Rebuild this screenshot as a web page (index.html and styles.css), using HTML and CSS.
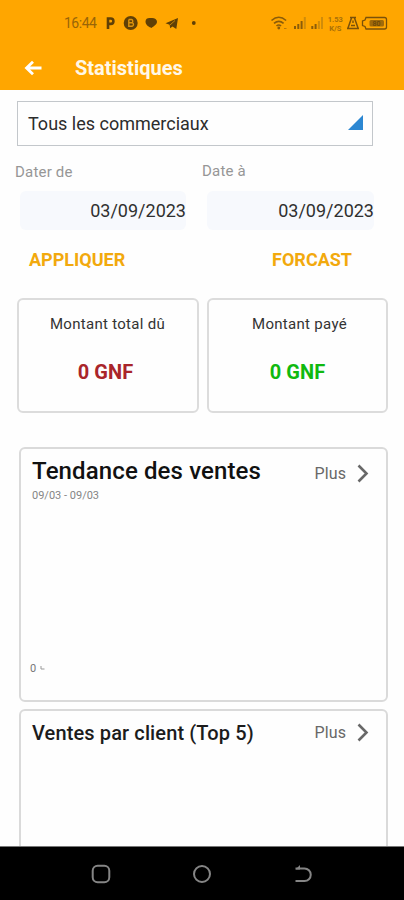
FILE: index.html
```html
<!DOCTYPE html>
<html lang="fr">
<head>
  <meta charset="UTF-8" />
  <meta name="viewport" content="width=device-width, initial-scale=1.0"/>
  <title>Statistiques</title>
  <link rel="stylesheet" href="styles.css">
</head>
<body>

  <header class="header">
    <div class="status-bar">
      <span class="clock">16:44</span>
      <svg class="status-left" width="94" height="20" viewBox="106 13 94 20">
        <path d="M108 29V18.500h2.700a2.600 2.600 0 0 1 0 5.400h-2.700" fill="none" stroke="#604006" stroke-width="2.600"/>
        <circle cx="130.700" cy="23" r="7" fill="#604006"/>
        <path d="M128.800 19.500v6.800h3.300a1.800 1.800 0 0 0 0-3.500h-3.300m0-3.300h2.700a1.700 1.700 0 0 1 0 3.300" fill="none" stroke="#dc930c" stroke-width="1.400"/>
        <path d="M145.500 21.500c0-3 2.500-4 5.500-3.500 3-.5 6 1 6 3.800 0 3-3.500 4.500-5.500 6.200-2-1-6-2.500-6-6.500z" fill="#604006"/>
        <path d="M165.500 23.300l12.500-5.300-1.700 11-3.800-2.500-2.300 1.700-.6-3.500z" fill="#604006"/>
        <path d="M170 25l5-4.500" stroke="#dc930c" stroke-width=".8"/>
        <circle cx="193.800" cy="23" r="1.900" fill="#604006"/>
      </svg>
      <svg class="status-right" width="118" height="20" viewBox="270 13 118 20">
        <g fill="none" stroke="#8a5c0a" stroke-width="1.600">
          <path d="M271.500 20.500q7.300-6.500 14.600 0M274 23.400q4.800-4.200 9.600 0M276.500 26q2.300-2 4.600 0"/>
        </g>
        <circle cx="278.800" cy="28" r="1.400" fill="#8a5c0a"/>
        <path d="M284 28.500h2.500" stroke="#b97b0a"/>
        <g stroke-width="2">
          <path d="M295 29v-3M298.300 29v-5M301.600 29v-8M312.300 29v-3M315.600 29v-5" stroke="#8a5c0a"/>
          <path d="M304.800 29v-12M318.900 29v-8M322 29v-12" stroke="#d08c0a"/>
        </g>
        <text class="net-speed" x="335.300" y="21.500">1.53</text>
        <text class="net-speed" x="335.300" y="30.500">K/S</text>
        <g fill="none" stroke="#7a510a">
          <path d="M350 17.500h6M351.500 18l-3.500 10M354.500 18l3.500 10M347 28.500h12" stroke-width="1.500"/>
          <path d="M353 20.500v2.500M351 25.500h4" stroke-width="1.400"/>
          <path d="M366 17.500h18.500a2 2 0 0 1 2 2v7.500a2 2 0 0 1-2 2h-18.500l-1-2.500-2.500-1v-4.500l2.500-1z" stroke-width="1.300"/>
        </g>
        <rect x="369.500" y="20" width="14.500" height="6.500" rx="1.500" fill="#a06a0a"/>
        <text class="battery-level" x="376.500" y="26">80</text>
      </svg>
    </div>
    <div class="title-bar">
      <svg class="back" width="18" height="16" viewBox="0 0 18 16">
        <path d="M17.500 8H2M9 1.700L2.500 8 9 14.300" fill="none" stroke="#fff" stroke-width="2.800"/>
      </svg>
      <h1>Statistiques</h1>
    </div>
  </header>

  <main class="content">
    <div class="select">
      <span>Tous les commerciaux</span>
      <svg width="15" height="15" viewBox="0 0 15 15"><path d="M15 0v15H0z" fill="#2c87d2"/></svg>
    </div>

    <div class="dates">
      <div class="date-field">
        <label>Dater de</label>
        <div class="date-input">03/09/2023</div>
      </div>
      <div class="date-field date-end">
        <label>Date à</label>
        <div class="date-input">03/09/2023</div>
      </div>
    </div>

    <div class="actions">
      <span class="action">APPLIQUER</span>
      <span class="action">FORCAST</span>
    </div>

    <div class="amounts">
      <div class="amount-card">
        <div class="amount-label">Montant total dû</div>
        <div class="amount due">0 GNF</div>
      </div>
      <div class="amount-card">
        <div class="amount-label">Montant payé</div>
        <div class="amount paid">0 GNF</div>
      </div>
    </div>

    <section class="card trend">
      <div class="card-head">
        <h2>Tendance des ventes</h2>
        <span class="more">Plus</span>
        <svg width="12" height="19" viewBox="0 0 12 19"><path d="M1.500 1.500l8 8-8 8" fill="none" stroke="#686868" stroke-width="2.600"/></svg>
      </div>
      <div class="period">09/03 - 09/03</div>
      <div class="chart">
        <span class="tick">0</span>
        <svg width="5" height="5" viewBox="0 0 5 5"><path d="M1 0v3h3.500" fill="none" stroke="#999"/></svg>
      </div>
    </section>

    <section class="card clients">
      <div class="card-head">
        <h2>Ventes par client (Top 5)</h2>
        <span class="more">Plus</span>
        <svg width="12" height="19" viewBox="0 0 12 19"><path d="M1.500 1.500l8 8-8 8" fill="none" stroke="#686868" stroke-width="2.600"/></svg>
      </div>
    </section>
  </main>

  <nav class="nav-bar">
    <svg width="20" height="20" viewBox="0 0 20 20"><rect x="1.700" y="1.700" width="16.600" height="16.600" rx="5" fill="none" stroke="#858585" stroke-width="2"/></svg>
    <svg width="20" height="20" viewBox="0 0 20 20"><circle cx="10" cy="10" r="8" fill="none" stroke="#858585" stroke-width="2"/></svg>
    <svg width="20" height="20" viewBox="0 0 20 20"><path d="M2.500 4.500h9a6 6 0 0 1 0 12.500H2.500" fill="none" stroke="#858585" stroke-width="2"/><path d="M2.500 5.500L7 1v4.500z" fill="#858585"/></svg>
  </nav>

</body>
</html>
```
FILE: styles.css
```css
* {
  box-sizing: border-box;
}

body {
  margin: 0;
  height: 900px;
  display: flex;
  flex-direction: column;
  overflow: hidden;
  font-family: Roboto, "Liberation Sans", sans-serif;
  background-color: #fefefe;
  color: #222;
}

svg {
  display: block;
  flex-shrink: 0;
}

/* Header */
.header {
  height: 90px;
  flex-shrink: 0;
  background-color: #ffa600;
}

.status-bar {
  height: 46px;
  padding: 0 16px 0 64px;
  display: flex;
  align-items: center;
}

.clock {
  width: 42px;
  font-size: 14px;
  line-height: 20px;
  letter-spacing: -0.5px;
  color: #986508;
}

.status-right {
  margin-left: auto;
}

.net-speed {
  font-size: 7.5px;
  font-weight: bold;
  text-anchor: middle;
  fill: #a87009;
}

.battery-level {
  font-size: 7px;
  text-anchor: middle;
  fill: #5e3f08;
}

.title-bar {
  height: 44px;
  padding-left: 24px;
  display: flex;
  align-items: center;
  gap: 33px;
}

.title-bar h1 {
  margin: 0;
  font-size: 20px;
  line-height: 42px;
  color: #fff8e8;
}

/* Filters */
.content {
  flex: 1;
  min-height: 0;
  padding: 11px 16px 0 17px;
  overflow: hidden;
}

.select {
  width: 356px;
  height: 45px;
  padding: 0 9px 0 10px;
  display: flex;
  align-items: center;
  justify-content: space-between;
  border: 1px solid #c3c7cb;
  font-size: 18px;
  color: #2c2c2c;
}

.select svg {
  margin-bottom: 3px;
}

.dates {
  margin-top: 15px;
  display: flex;
  gap: 18px;
}

.date-field {
  width: 169px;
}

.date-field label {
  display: block;
  height: 30px;
  margin-left: -2px;
  font-size: 15px;
  line-height: 22px;
  letter-spacing: 0.2px;
  color: #969696;
}

.date-end label {
  line-height: 20px;
}

.date-input {
  height: 39px;
  margin-left: 3px;
  border-radius: 6px;
  background-color: #f7f9fd;
  font-size: 18px;
  line-height: 39px;
  text-align: right;
  color: #303030;
}

.date-end {
  width: 170px;
}

.actions {
  height: 68px;
  padding: 18px 36px 0 12px;
  display: flex;
  justify-content: space-between;
}

.action {
  font-size: 18px;
  font-weight: bold;
  line-height: 24px;
  color: #f2a90d;
}

/* Amounts */
.amounts {
  display: grid;
  grid-template-columns: 182px 181px;
  gap: 8px;
}

.amount-card {
  height: 115px;
  padding-top: 14px;
  border: 2px solid #dcdcdc;
  border-radius: 6px;
  text-align: center;
}

.amount-card:first-child {
  padding-right: 1px;
}

.amount-card:last-child {
  padding-left: 4px;
}

.amount-label {
  font-size: 15px;
  line-height: 20px;
  letter-spacing: 0.3px;
  color: #333;
}

.amount {
  margin: 24px 4px 0 0;
  font-size: 20px;
  font-weight: bold;
  line-height: 28px;
  letter-spacing: 0.1px;
}

.due {
  color: #a9252a;
}

.paid {
  color: #10b910;
}

/* Cards */
.card {
  width: 369px;
  margin-left: 2px;
  border: 2px solid #dadada;
  border-radius: 6px;
}

.trend {
  height: 255px;
  margin-top: 34px;
}

.clients {
  height: 255px;
  margin-top: 7px;
}

.card-head {
  padding: 0 17px 0 11px;
  display: flex;
  align-items: center;
}

.card-head h2 {
  margin: 0 auto 0 0;
  font-size: 20px;
  font-weight: 500;
  letter-spacing: 0.12px;
  color: #1c1c1c;
}

.trend .card-head {
  height: 48px;
}

.trend h2 {
  padding-bottom: 4px;
  font-size: 24px;
  color: #111;
}

.clients .card-head {
  height: 43px;
}

.more {
  margin-right: 11px;
  font-size: 16px;
  letter-spacing: 0.1px;
  color: #686868;
}

.period {
  margin: -7px 0 0 11px;
  font-size: 11px;
  line-height: 12px;
  color: #858585;
}

.chart {
  height: 173px;
  padding-left: 9px;
  display: flex;
  align-items: flex-end;
  gap: 4px;
}

.chart svg {
  margin-bottom: 4px;
}

.tick {
  font-size: 11px;
  line-height: 12px;
  color: #777;
}

/* System navigation */
.nav-bar {
  height: 54px;
  flex-shrink: 0;
  padding: 0 91px;
  display: flex;
  align-items: center;
  justify-content: space-between;
  border-top: 1px solid #777;
  background-color: #000;
}
```
